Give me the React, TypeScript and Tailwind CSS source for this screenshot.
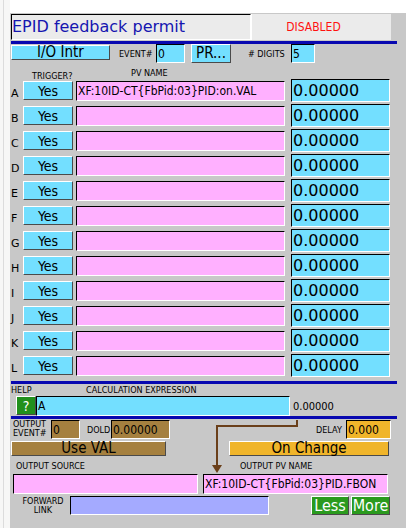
import React from "react";

const LETTERS = ["A", "B", "C", "D", "E", "F", "G", "H", "I", "J", "K", "L"];

const raised = "border border-t-white border-l-white border-r-[#4a4a4a] border-b-[#4a4a4a]";
const sunken = "border border-t-black border-l-black border-r-white border-b-white";
const cond = "font-['DejaVu_Sans_Condensed','DejaVu_Sans',sans-serif] [font-stretch:condensed]";
const norm = "font-['DejaVu_Sans','Liberation_Sans',sans-serif]";

function Label({ children, className = "" }: { children: React.ReactNode; className?: string }) {
  return <span className={`${cond} text-[9px] leading-none text-black whitespace-nowrap ${className}`}>{children}</span>;
}

function InputRow({ letter, pv }: { letter: string; pv: string }) {
  return (
    <div className="flex h-[25px] items-start">
      <span className={`${norm} w-[12px] pt-[9px] text-[11px] leading-none text-black`}>{letter}</span>
      <div className={`${raised} ${cond} mt-[2px] flex h-[19px] w-[50px] items-center justify-center bg-[#73dfff] text-[14px] leading-none`}>
        Yes
      </div>
      <div className={`${sunken} ${cond} ml-[3px] mt-[2px] flex h-[20px] w-[209px] items-center bg-[#ffb0ff] px-[1px] text-[12px] leading-none`}>
        {pv}
      </div>
      <div className={`${sunken} ${norm} ml-[6px] flex h-[23px] w-[99px] items-center bg-[#73dfff] px-[1px] text-[16px] leading-none`}>
        0.00000
      </div>
    </div>
  );
}

export default function App() {
  return (
    <div className="flex h-[528px] w-[406px] overflow-hidden bg-white">
      <div className="h-full w-[10px] bg-[#f7f7f6] pl-[3px]">
        <div className="h-full w-px bg-[#dcdcdc]" />
      </div>
      <div className="flex flex-1 flex-col">
        <div className="h-[13px] bg-white" />
        <div className="relative flex-1 bg-[#c8c8c8] pl-[1px] pt-[1px]">
          {/* title */}
          <div className="flex h-[26px] w-[380px]">
            <div className={`${sunken} border-r-[#ebebeb] ${norm} flex w-[240px] items-center bg-[#ebebeb] text-[16px] leading-none text-[#1515b0]`}>
              EPID feedback permit
            </div>
            <div className={`${cond} flex w-[140px] items-center justify-center border-l border-white bg-[#ebebeb] pr-[16px] text-[12px] leading-none text-[#ff1010]`}>
              DISABLED
            </div>
          </div>
          <div className="mt-[1px] h-[3px] w-[386px] bg-[#0808b0]" />

          {/* scan row */}
          <div className="flex h-[20px] items-start">
            <div className={`${raised} ${cond} mt-[1px] flex h-[15px] w-[99px] items-center justify-center bg-[#73dfff] text-[15px] leading-none`}>
              I/O Intr
            </div>
            <Label className="ml-[9px] mt-[6px] w-[37px]">EVENT#</Label>
            <div className={`${sunken} ${cond} flex h-[19px] w-[29px] items-center bg-[#73dfff] px-[1px] text-[12px] leading-none`}>0</div>
            <div className={`${raised} ${cond} ml-[6px] flex h-[19px] w-[40px] items-center justify-center bg-[#73dfff] text-[15px] leading-none`}>
              PR...
            </div>
            <Label className="ml-[17px] mt-[6px] w-[43px]">#&nbsp;DIGITS</Label>
            <div className={`${sunken} ${cond} flex h-[19px] w-[24px] items-center bg-[#73dfff] px-[1px] text-[12px] leading-none`}>5</div>
          </div>

          {/* column headers */}
          <div className="relative h-[15px]">
            <Label className="absolute left-[21px] top-[8px]">TRIGGER?</Label>
            <Label className="absolute left-[120px] top-[5px]">PV NAME</Label>
          </div>

          {LETTERS.map((l, i) => (
            <InputRow key={l} letter={l} pv={i === 0 ? "XF:10ID-CT{FbPid:03}PID:on.VAL" : ""} />
          ))}

          <div className="mt-[2px] h-[3px] w-[386px] bg-[#0808b0]" />

          {/* calc */}
          <div className="flex h-[11px] items-end">
            <Label className="w-[75px]">HELP</Label>
            <Label>CALCULATION EXPRESSION</Label>
          </div>
          <div className="flex h-[21px] items-start pt-[1px]">
            <div className={`${raised} ml-[5px] flex h-[19px] w-[20px] items-center justify-center bg-[#21901c] ${cond} text-[14px] leading-none text-white`}>
              ?
            </div>
            <div className={`${sunken} ${cond} flex h-[20px] w-[254px] items-center bg-[#73dfff] px-[1px] text-[12px] leading-none`}>A</div>
            <span className={`${cond} ml-[3px] mt-[5px] text-[11px] leading-none`}>0.00000</span>
          </div>
          <div className="h-[3px] w-[386px] bg-[#0808b0]" />

          {/* output */}
          <div className="flex h-[22px] items-start pt-[1px]">
            <div className={`${cond} ml-[2px] w-[38px] text-[9px] leading-[9px]`}>
              OUTPUT<br />EVENT#
            </div>
            <div className={`${sunken} ${cond} flex h-[19px] w-[29px] items-center bg-[#a5803f] px-[1px] text-[12px] leading-none`}>0</div>
            <Label className="ml-[7px] mt-[6px] w-[24px]">DOLD</Label>
            <div className={`${sunken} ${cond} flex h-[19px] w-[59px] items-center bg-[#a5803f] px-[1px] text-[12px] leading-none`}>0.00000</div>
            <Label className="ml-[146px] mt-[6px] w-[30px]">DELAY</Label>
            <div className={`${sunken} ${cond} flex h-[19px] w-[45px] items-center bg-[#f0b52b] px-[1px] text-[12px] leading-none`}>0.000</div>
          </div>
          <div className="flex h-[15px] items-start">
            <div className={`${raised} ${cond} flex h-[15px] w-[155px] items-center justify-center bg-[#a5803f] text-[15px] leading-none`}>
              Use VAL
            </div>
            <div className={`${raised} ${cond} ml-[63px] flex h-[15px] w-[160px] items-center justify-center bg-[#f0b52b] text-[15px] leading-none`}>
              On Change
            </div>
          </div>
          <div className="flex h-[18px] items-center pt-[3px]">
            <Label className="ml-[5px] w-[224px]">OUTPUT SOURCE</Label>
            <Label>OUTPUT PV NAME</Label>
          </div>
          <div className="flex h-[22px] items-start">
            <div className={`${sunken} ml-[2px] h-[20px] w-[185px] bg-[#ffb0ff]`} />
            <div className={`${sunken} ${cond} ml-[5px] flex h-[20px] w-[185px] items-center bg-[#ffb0ff] px-[1px] text-[12px] leading-none`}>
              XF:10ID-CT{"{"}FbPid:03{"}"}PID.FBON
            </div>
          </div>
          <div className="flex h-[21px] items-start">
            <div className={`${cond} ml-[5px] mt-[1px] w-[54px] text-center text-[9px] leading-[9px]`}>
              FORWARD<br />LINK
            </div>
            <div className={`${sunken} h-[19px] w-[199px] bg-[#a4aaff]`} />
            <div className={`${raised} ${cond} ml-[42px] flex h-[19px] w-[38px] items-center justify-center bg-[#2a9a1e] text-[16px] leading-none text-white`}>
              Less
            </div>
            <div className={`${raised} ${cond} ml-[2px] flex h-[19px] w-[39px] items-center justify-center bg-[#2a9a1e] text-[16px] leading-none text-white`}>
              More
            </div>
          </div>

          {/* link from calc to output */}
          <svg className="absolute left-0 top-0" width="396" height="515" viewBox="0 0 396 515">
            <polyline points="287,407 287,413 207,413 207,453" fill="none" stroke="#6a3f1a" strokeWidth="2" />
            <polygon points="202,452 212,452 207,460" fill="#6a3f1a" />
          </svg>
        </div>
      </div>
    </div>
  );
}
